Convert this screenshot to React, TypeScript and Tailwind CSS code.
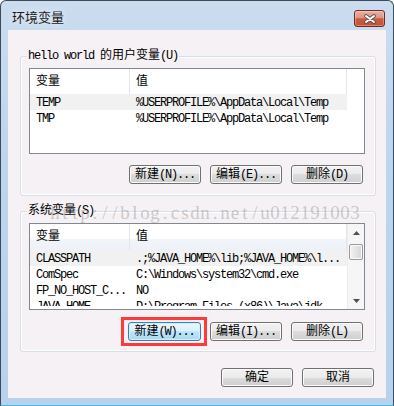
import React from "react";

const CJK = /[\u4e00-\u9fff]/;

function Txt({ s }: { s: string }) {
  const parts = s.match(/[\u4e00-\u9fff]+|[^\u4e00-\u9fff]+/g) || [];
  return (
    <>
      {parts.map((p, i) =>
        CJK.test(p) ? (
          <span key={i} className="tracking-normal">{p}</span>
        ) : (
          <span key={i} className="tracking-[-1.2px]">{p}</span>
        )
      )}
    </>
  );
}

function Btn({ label, focused }: { label: string; focused?: boolean }) {
  return (
    <div
      className={
        focused
          ? "w-[73px] h-[19px] rounded-[3px] border border-[#3c7fb1] bg-[linear-gradient(to_bottom,#eaf6fd_0%,#d9f0fc_50%,#bee6fd_50%,#a7d9f5_100%)] shadow-[inset_0_0_0_1px_#d6eefc] flex items-center justify-center text-[12px] leading-none text-black whitespace-pre"
          : "w-[72px] h-[19px] rounded-[3px] border border-[#707070] bg-[linear-gradient(to_bottom,#f2f2f2_0%,#ebebeb_50%,#dddddd_50%,#cfcfcf_100%)] shadow-[inset_0_0_0_1px_#fbfbfb] flex items-center justify-center text-[12px] leading-none text-black whitespace-pre"
      }
    >
      <Txt s={label} />
    </div>
  );
}

type Row = [string, string];

function ListView({
  rows,
  second,
}: {
  rows: Row[];
  second?: boolean;
}) {
  return (
    <div
      className={
        second
          ? "w-[336px] h-[87px] border border-[#828790] bg-white overflow-hidden flex"
          : "w-[336px] h-[86px] border border-[#828790] bg-white overflow-hidden flex"
      }
    >
      <div
        className={
          second
            ? "w-[317px] shrink-0 flex flex-col overflow-hidden mb-[3px]"
            : "w-[317px] shrink-0 flex flex-col overflow-hidden"
        }
      >
        <div
          className={
            second
              ? "h-[26px] shrink-0 flex bg-[linear-gradient(to_bottom,#ffffff_0%,#ffffff_55%,#f1f4f9_60%,#edf1f8_100%)]"
              : "h-[25px] shrink-0 flex bg-white"
          }
        >
          <div className="w-[100px] border-r border-[#e3e5e8] pl-[6px] flex items-center text-[12px]">变量</div>
          <div className="w-[217px] border-r border-[#e3e5e8] pl-[6px] flex items-center text-[12px]">值</div>
        </div>
        {rows.map((r, i) => (
          <div
            key={i}
            className={
              i === 0
                ? "h-[16px] shrink-0 flex pt-[2px] bg-[#f1f1f1] text-[12px] leading-[14px] whitespace-pre"
                : "h-[16px] shrink-0 flex pt-[2px] text-[12px] leading-[14px] whitespace-pre"
            }
          >
            <div className="w-[100px] pl-[6px]"><Txt s={r[0]} /></div>
            <div className="w-[217px] pl-[6px]"><Txt s={r[1]} /></div>
          </div>
        ))}
      </div>
      {second ? (
        <div className="flex-1 flex flex-col bg-[#f6f6f6] border-l border-[#ececec]">
          <div className="h-[17px] flex items-center justify-center">
            <svg width="7" height="4" viewBox="0 0 7 4">
              <polygon points="3.5,0 7,4 0,4" fill="#4f4f4f" />
            </svg>
          </div>
          <div className="mt-[3px] mx-[1px] h-[16px] rounded-[2px] border border-[#9a9a9a] bg-[linear-gradient(to_right,#f3f3f3,#e4e4e4_50%,#d6d6d6)] shadow-[inset_0_0_0_1px_#fafafa]" />
          <div className="flex-1" />
          <div className="h-[17px] flex items-center justify-center">
            <svg width="7" height="4" viewBox="0 0 7 4">
              <polygon points="0,0 7,0 3.5,4" fill="#4f4f4f" />
            </svg>
          </div>
        </div>
      ) : (
        <div className="flex-1" />
      )}
    </div>
  );
}

function Group({ label, children, second }: { label: string; children: React.ReactNode; second?: boolean }) {
  return (
    <div
      className={
        second
          ? "relative mt-[15px] ml-[12px] w-[356px] rounded-[3px] border border-[#d5dfe5] shadow-[inset_0_0_0_1px_#ffffff] pt-[11px] pl-[8px] pr-[10px] pb-[10px]"
          : "relative mt-[26px] ml-[12px] w-[356px] rounded-[3px] border border-[#d5dfe5] shadow-[inset_0_0_0_1px_#ffffff] pt-[11px] pl-[8px] pr-[10px] pb-[11px]"
      }
    >
      <div className="absolute -top-[9px] left-[6px] px-[1px] bg-[#f6f1f5] text-[12px] leading-[16px] whitespace-pre">
        <Txt s={label} />
      </div>
      {children}
    </div>
  );
}

const WM = "http://blog.csdn.net/u012191003";

export default function App() {
  return (
    <div className="relative w-[394px] h-[406px] overflow-hidden [font-family:'Liberation_Mono','Noto_Sans_CJK_SC',monospace] text-black">
      <div className="w-[394px] h-[406px] rounded-t-[6px] border border-[#3e4a59] border-b-[#2fbde4] bg-[linear-gradient(to_bottom,#cbdcef_0%,#bed5ee_40%,#b9d1ec_100%)] flex flex-col">
        <div className="h-[29px] shrink-0 flex items-start justify-between">
          <span className="ml-[11px] mt-[8px] text-[13px] leading-[16px] [font-family:'Noto_Sans_CJK_SC',sans-serif] text-[#1b1b1b] [text-shadow:0_0_6px_rgba(255,255,255,0.9)]">
            环境变量
          </span>
          <div className="mt-[9px] mr-[8px] w-[31px] h-[17px] rounded-[3px] border border-[#6e2b22] bg-[linear-gradient(to_bottom,#eab0a3_0%,#dc9482_45%,#c85c43_52%,#c9502f_100%)] shadow-[inset_0_0_0_1px_rgba(255,255,255,0.3)] flex items-center justify-center">
            <svg width="14" height="10" viewBox="0 0 14 10">
              <path d="M3 2 L11 8 M11 2 L3 8" stroke="#505050" strokeWidth="3.6" strokeLinecap="round" />
              <path d="M3 2 L11 8 M11 2 L3 8" stroke="#ffffff" strokeWidth="2" strokeLinecap="round" />
            </svg>
          </div>
        </div>
        <div className="mx-[7px] h-[368px] shrink-0 bg-[#f6f1f5] flex flex-col">
          <Group label="hello world 的用户变量(U)">
            <ListView
              rows={[
                ["TEMP", "%USERPROFILE%\\AppData\\Local\\Temp"],
                ["TMP", "%USERPROFILE%\\AppData\\Local\\Temp"],
              ]}
            />
            <div className="mt-[11px] mr-[2px] flex justify-end gap-[9px]">
              <Btn label="新建(N)..." />
              <Btn label="编辑(E)..." />
              <Btn label="删除(D)" />
            </div>
          </Group>
          <Group label="系统变量(S)" second>
            <ListView
              second
              rows={[
                ["CLASSPATH", ".;%JAVA_HOME%\\lib;%JAVA_HOME%\\l..."],
                ["ComSpec", "C:\\Windows\\system32\\cmd.exe"],
                ["FP_NO_HOST_C...", "NO"],
                ["JAVA_HOME", "D:\\Program Files (x86)\\Java\\jdk"],
              ]}
            />
            <div className="mt-[12px] mr-[2px] flex justify-end gap-[9px]">
              <Btn label="新建(W)..." focused />
              <Btn label="编辑(I)..." />
              <Btn label="删除(L)" />
            </div>
          </Group>
          <div className="mt-[16px] pr-[12px] flex justify-end gap-[9px]">
            <Btn label="确定" />
            <Btn label="取消" />
          </div>
        </div>
      </div>
      <div className="pointer-events-none absolute left-[50px] top-[203px] flex text-[19px] leading-[20px] [font-family:'Liberation_Serif',serif] text-[rgba(120,120,120,0.36)]">
        {WM.split("").map((c, i) => (
          <span key={i} className="inline-block w-[10px] text-center">{c}</span>
        ))}
      </div>
      <div className="pointer-events-none absolute left-[121px] top-[317px] w-[86px] h-[29px] border-[3px] border-[#ff3a3a]" />
    </div>
  );
}
